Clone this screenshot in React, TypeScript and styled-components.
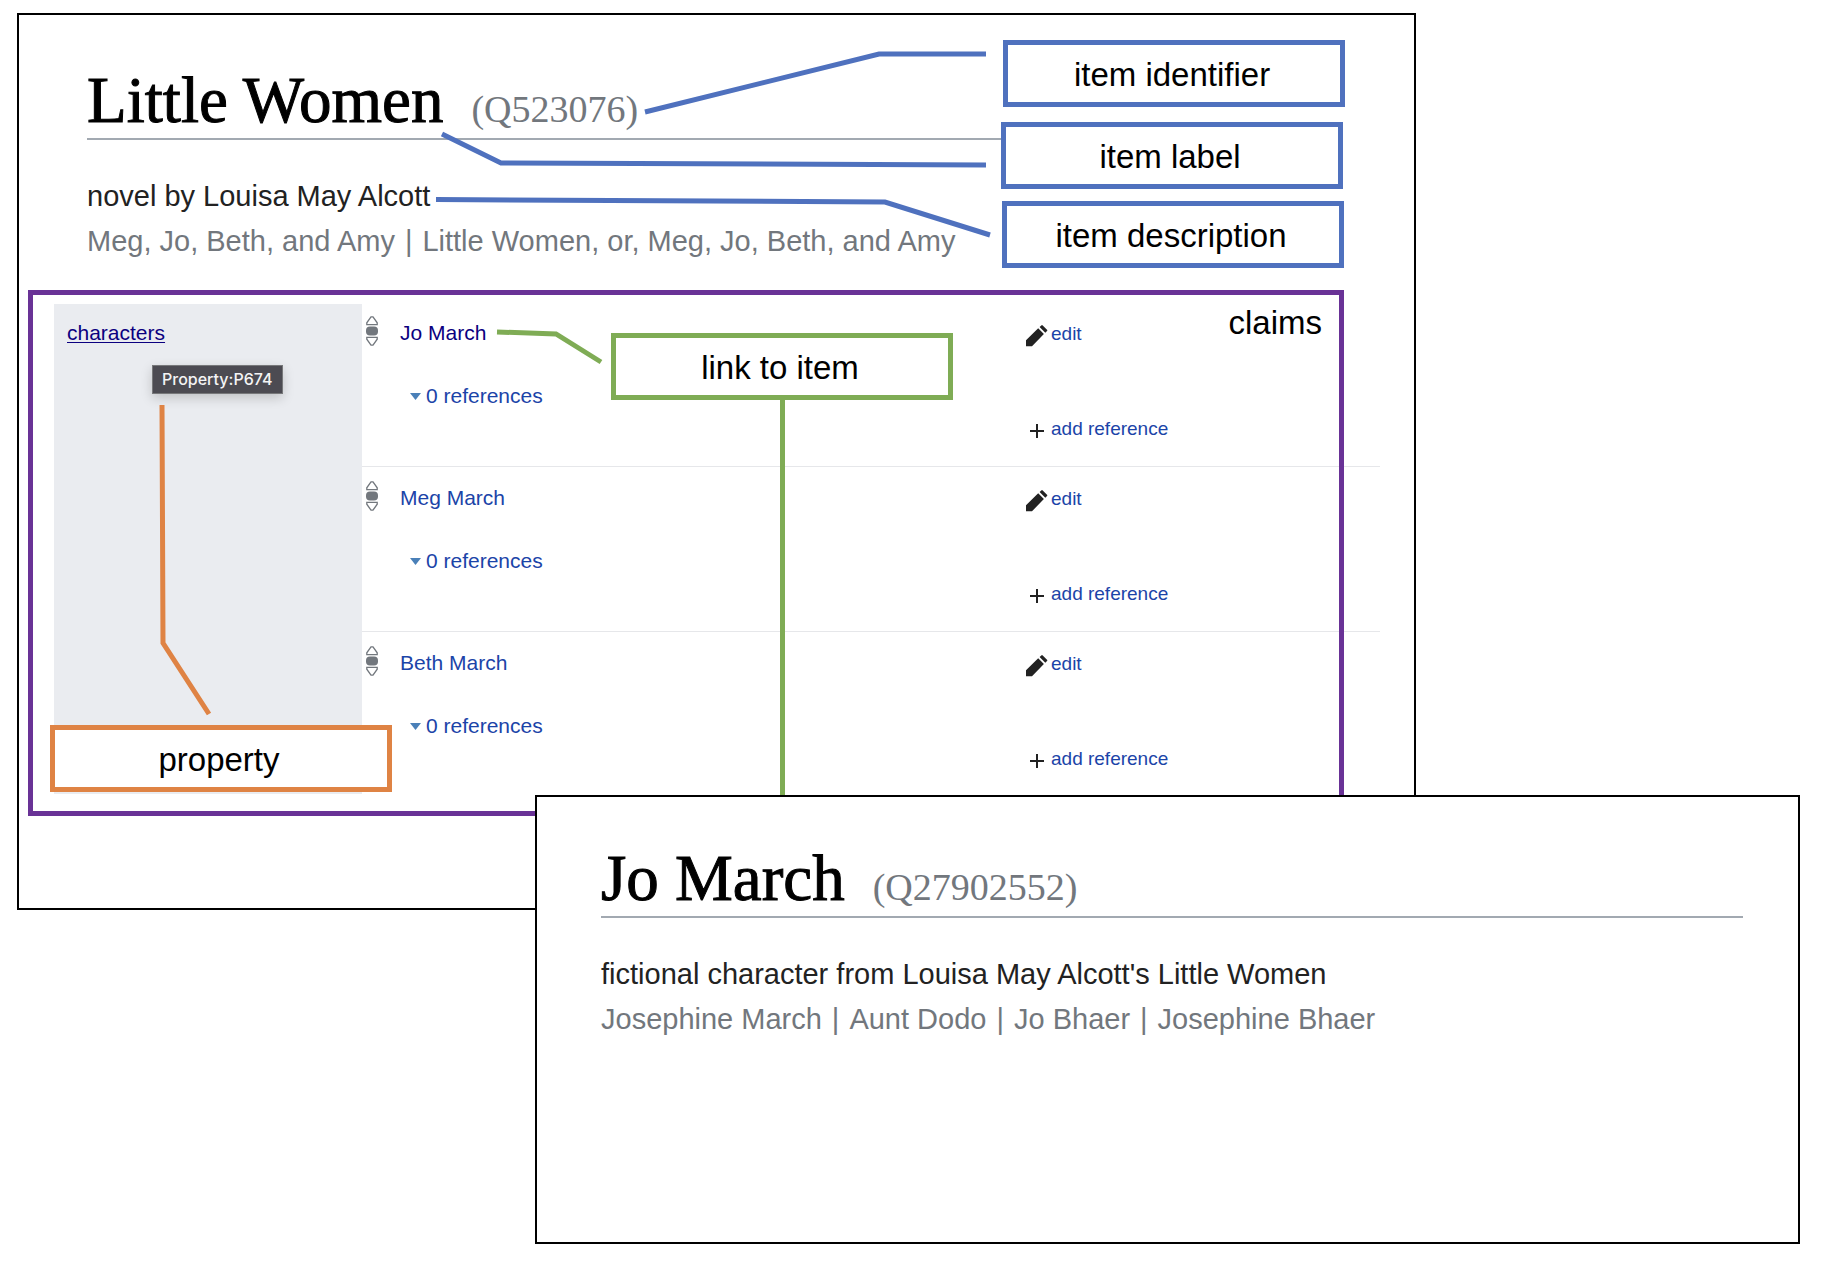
import React from "react";
import styled, { createGlobalStyle } from "styled-components";

const SANS = '"Helvetica Neue", Helvetica, "Liberation Sans", Arial, sans-serif';
const SERIF = '"Liberation Serif", Georgia, serif';

const BLUE = "#4f71be";
const GREEN = "#7fac55";
const ORANGE = "#df8344";
const PURPLE = "#693296";

const GlobalStyle = createGlobalStyle`
  *, *::before, *::after { box-sizing: border-box; }
  body { margin: 0; background: #fff; font-family: ${SANS}; }
  h1, p, ul { margin: 0; padding: 0; font-weight: 400; }
  ul { list-style: none; }
`;

const Stage = styled.main`
  position: relative;
  padding: 13px 22px 26px 17px;
  min-width: 1400px;
`;

const EntityCard = styled.article<{ $front?: boolean }>`
  position: relative;
  background: #fff;
  border: 2px solid #000;
  margin: ${(p) => (p.$front ? "-115px 0 0 518px" : "0 384px 0 0")};
  padding: ${(p) => (p.$front ? "45px 0 200px" : "49px 0 111px")};
  z-index: ${(p) => (p.$front ? 2 : 0)};
`;

const EntityHeader = styled.header<{ $front?: boolean }>`
  margin: ${(p) => (p.$front ? "0 55px 0 64px" : "0 80px 0 68px")};
`;

const Title = styled.h1`
  display: flex;
  align-items: baseline;
  gap: 28px;
  padding-bottom: 2px;
  border-bottom: 2px solid #a2a9b1;
  font-family: ${SERIF};
  font-size: 65px;
  line-height: 72px;
  color: #000;
  -webkit-text-stroke: 1px #000;
`;

const EntityId = styled.span`
  font-size: 38px;
  line-height: 45px;
  color: #72777d;
  -webkit-text-stroke: 0;
`;

const Description = styled.p`
  margin-top: 34px;
  font-size: 29px;
  line-height: 45px;
  color: #222;
`;

const Aliases = styled.ul`
  display: flex;
  font-size: 29px;
  line-height: 45px;
  color: #72777d;
`;

const Alias = styled.li`
  white-space: nowrap;
  & + &::before {
    content: "|";
    margin: 0 10px;
  }
`;

const StatementGroup = styled.section`
  display: flex;
  margin: 38px 34px 0 35px;
`;

const PropertyPanel = styled.div`
  position: relative;
  flex: 0 0 308px;
  margin: 2px 0 3px;
  padding: 16px 13px;
  background: #eaecf0;
`;

const Link = styled.a<{ $visited?: boolean; $underlined?: boolean }>`
  font-size: 21px;
  line-height: 26px;
  color: ${(p) => (p.$visited ? "#0b0080" : "#1b44a8")};
  text-decoration: ${(p) => (p.$underlined ? "underline" : "none")};
  text-decoration-thickness: 1px;
  text-underline-offset: 2px;
`;

const Tooltip = styled.div`
  position: absolute;
  left: 98px;
  top: 61px;
  padding: 0 10px 0 9px;
  border: 1px solid #77787a;
  background: #4c4b52;
  color: #f4f4f5;
  font: 500 16px/27px Inter, sans-serif;
  white-space: nowrap;
  box-shadow: 0 4px 12px rgba(0, 0, 0, 0.18);
`;

const StatementList = styled.ul`
  flex: 1;
`;

const Statement = styled.li`
  display: flex;
  height: 165px;
  & + & { box-shadow: 0 -1px 0 #e6e7ea; }
`;

const RankColumn = styled.div`
  flex: 0 0 38px;
  padding: 14px 0 0 4px;
`;

const ValueColumn = styled.div`
  flex: 1;
  display: flex;
  flex-direction: column;
  align-items: flex-start;
  gap: 37px;
  padding-top: 18px;
`;

const ActionColumn = styled.div`
  flex: 0 0 354px;
  display: flex;
  flex-direction: column;
  align-items: flex-start;
  gap: 69px;
  padding-top: 19px;
`;

const ToggleButton = styled.button`
  display: flex;
  align-items: center;
  gap: 5px;
  margin-left: 10px;
  padding: 0;
  border: 0;
  background: none;
  font: 21px/26px ${SANS};
  color: #1b44a8;
`;

const ActionButton = styled.button`
  display: flex;
  align-items: center;
  gap: 3px;
  padding: 0;
  border: 0;
  background: none;
  font: 19px/26px ${SANS};
  color: #1b44a8;
  svg { margin-top: 4px; }
`;

const Frame = styled.div`
  position: absolute;
  left: 28px;
  top: 290px;
  width: 1316px;
  height: 526px;
  padding: 9px 17px;
  border: 5px solid ${PURPLE};
  font-size: 33px;
  line-height: 38px;
  text-align: right;
  pointer-events: none;
  z-index: 1;
`;

const Note = styled.div<{ $x: number; $y: number; $color: string }>`
  position: absolute;
  left: ${(p) => p.$x}px;
  top: ${(p) => p.$y}px;
  width: 342px;
  padding: 11px 4px 8px 0;
  border: 5px solid ${(p) => p.$color};
  background: #fff;
  font-size: 33px;
  line-height: 38px;
  text-align: center;
  color: #000;
  z-index: 1;
`;

const Connectors = styled.svg`
  position: absolute;
  left: 0;
  top: 0;
  pointer-events: none;
  z-index: 1;
`;

const RankIcon = () => (
  <svg width="12" height="30" viewBox="0 0 12 30" fill="none" stroke="#72777d" aria-hidden="true">
    <path d="M5 .8h2L11.2 6.800v1.900H.8V6.800z" strokeWidth="1.3" />
    <rect x="0" y="10.5" width="12" height="9" rx="4" fill="#72777d" stroke="none" />
    <path d="M.8 21.300h10.400v1.900L7 29.200H5L.8 23.200z" strokeWidth="1.3" />
  </svg>
);

const CaretIcon = () => (
  <svg width="11" height="7" viewBox="0 0 11 7" aria-hidden="true">
    <path d="M0 0h11L5.500 7z" fill="#4a80b8" />
  </svg>
);

const PencilIcon = () => (
  <svg width="22" height="22" viewBox="0 0 22 22" fill="#222" aria-hidden="true">
    <path d="M0 15.200 12.200 3.300l5.700 5.700L6 21.300H0zM13.600 2l1.700-1.600q.7-.6 1.400 0l4.300 4.300q.6.700 0 1.400L19.300 7.700z" />
  </svg>
);

const PlusIcon = () => (
  <svg width="22" height="22" viewBox="0 0 22 22" stroke="#222" strokeWidth="2" aria-hidden="true">
    <path d="M4 11h14M11 4v14" />
  </svg>
);

const characters = [
  { name: "Jo March", visited: true },
  { name: "Meg March", visited: false },
  { name: "Beth March", visited: false },
];

const notes = [
  { text: "item identifier", x: 1003, y: 40, color: BLUE },
  { text: "item label", x: 1001, y: 122, color: BLUE },
  { text: "item description", x: 1002, y: 201, color: BLUE },
  { text: "link to item", x: 611, y: 333, color: GREEN },
  { text: "property", x: 50, y: 725, color: ORANGE },
];

type EntityProps = { label: string; id: string; description: string; aliases: string[]; front?: boolean };

const Entity = ({ label, id, description, aliases, front }: EntityProps) => (
  <EntityHeader $front={front}>
    <Title>
      {label}
      <EntityId>({id})</EntityId>
    </Title>
    <Description>{description}</Description>
    <Aliases>
      {aliases.map((a) => (
        <Alias key={a}>{a}</Alias>
      ))}
    </Aliases>
  </EntityHeader>
);

export default function App() {
  return (
    <Stage>
      <GlobalStyle />
      <EntityCard>
        <Entity
          label="Little Women"
          id="Q523076"
          description="novel by Louisa May Alcott"
          aliases={["Meg, Jo, Beth, and Amy", "Little Women, or, Meg, Jo, Beth, and Amy"]}
        />
        <StatementGroup>
          <PropertyPanel>
            <Link href="#P674" $visited $underlined>characters</Link>
            <Tooltip role="tooltip">Property:P674</Tooltip>
          </PropertyPanel>
          <StatementList>
            {characters.map((c) => (
              <Statement key={c.name}>
                <RankColumn><RankIcon /></RankColumn>
                <ValueColumn>
                  <Link href="#item" $visited={c.visited}>{c.name}</Link>
                  <ToggleButton type="button"><CaretIcon />0 references</ToggleButton>
                </ValueColumn>
                <ActionColumn>
                  <ActionButton type="button"><PencilIcon />edit</ActionButton>
                  <ActionButton type="button"><PlusIcon />add reference</ActionButton>
                </ActionColumn>
              </Statement>
            ))}
          </StatementList>
        </StatementGroup>
      </EntityCard>

      <Frame>claims</Frame>
      <Connectors width="1400" height="800" viewBox="0 0 1400 800" fill="none" strokeWidth="5" aria-hidden="true">
        <g stroke={BLUE}>
          <path d="M645 112 879 54H986" />
          <path d="M442 134 501 163 986 165" />
          <path d="M436 199.500 885 202 990 235" />
        </g>
        <g stroke={GREEN}>
          <path d="M497 332 556 334 601 362" />
          <path d="M782.500 399V795" />
        </g>
        <path d="M162 405 163 643 209 714" stroke={ORANGE} />
      </Connectors>
      {notes.map((n) => (
        <Note key={n.text} $x={n.x} $y={n.y} $color={n.color}>{n.text}</Note>
      ))}

      <EntityCard $front>
        <Entity
          front
          label="Jo March"
          id="Q27902552"
          description="fictional character from Louisa May Alcott's Little Women"
          aliases={["Josephine March", "Aunt Dodo", "Jo Bhaer", "Josephine Bhaer"]}
        />
      </EntityCard>
    </Stage>
  );
}
